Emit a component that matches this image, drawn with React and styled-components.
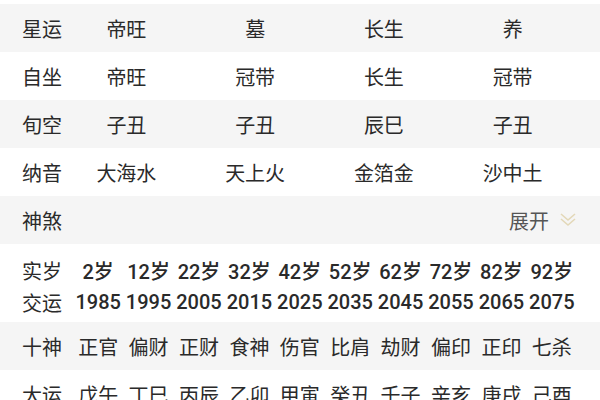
import React from 'react';
import styled, { createGlobalStyle } from 'styled-components';

const GlobalStyle = createGlobalStyle`
  body {
    margin: 0;
    background: #fff;
    font-family: "Roboto", "Noto Sans CJK SC", sans-serif;
    color: #2a2a2a;
  }
`;

const Page = styled.div`
  width: 600px;
  height: 400px;
  overflow: hidden;
  padding-top: 4px;
  box-sizing: border-box;
`;

const Row = styled.div`
  display: grid;
  grid-template-columns: ${(p) => (p.$wide ? '51px repeat(10, 1fr)' : '40px repeat(4, 1fr)')};
  align-items: center;
  height: ${(p) => p.$h || 48}px;
  padding: 0 23px 0 22px;
  background: ${(p) => (p.$shade ? '#f5f5f5' : '#fff')};
  font-size: 20px;
`;

const Label = styled.span`
  white-space: nowrap;
`;

const Cell = styled.span`
  text-align: center;
  white-space: nowrap;
  font-weight: ${(p) => (p.$bold ? 500 : 400)};
`;

const Toggle = styled.div`
  grid-column: 2 / -1;
  display: flex;
  justify-content: flex-end;
  align-items: center;
  gap: 10px;
  color: #555;
`;

const Block = styled.div`
  padding: 10px 23px 4px 22px;
  background: #fff;
`;

const Line = styled.div`
  display: grid;
  grid-template-columns: 51px repeat(10, 1fr);
  align-items: center;
  height: 32px;
  font-size: 20px;
`;

const main = [
  ['星运', ['帝旺', '墓', '长生', '养']],
  ['自坐', ['帝旺', '冠带', '长生', '冠带']],
  ['旬空', ['子丑', '子丑', '辰巳', '子丑']],
  ['纳音', ['大海水', '天上火', '金箔金', '沙中土']],
];

const ages = ['2岁', '12岁', '22岁', '32岁', '42岁', '52岁', '62岁', '72岁', '82岁', '92岁'];
const years = ['1985', '1995', '2005', '2015', '2025', '2035', '2045', '2055', '2065', '2075'];
const gods = ['正官', '偏财', '正财', '食神', '伤官', '比肩', '劫财', '偏印', '正印', '七杀'];
const luck = ['戊午', '丁巳', '丙辰', '乙卯', '甲寅', '癸丑', '壬子', '辛亥', '庚戌', '己酉'];

const Chevron = () => (
  <svg width="18" height="16" viewBox="0 0 18 16" fill="none" stroke="#e3d8b8" strokeWidth="1.6">
    <polyline points="2,2 9,8 16,2" />
    <polyline points="2,7 9,13 16,7" />
  </svg>
);

export default function App() {
  return (
    <Page>
      <GlobalStyle />
      {main.map(([label, vals], i) => (
        <Row key={label} $shade={i % 2 === 0}>
          <Label>{label}</Label>
          {vals.map((v, j) => (
            <Cell key={j}>{v}</Cell>
          ))}
        </Row>
      ))}
      <Row $shade>
        <Label>神煞</Label>
        <Toggle>
          展开
          <Chevron />
        </Toggle>
      </Row>
      <Block>
        <Line>
          <Label>实岁</Label>
          {ages.map((a) => (
            <Cell key={a} $bold>{a}</Cell>
          ))}
        </Line>
        <Line>
          <Label>交运</Label>
          {years.map((y) => (
            <Cell key={y} $bold>{y}</Cell>
          ))}
        </Line>
      </Block>
      <Row $wide $shade>
        <Label>十神</Label>
        {gods.map((g, i) => (
          <Cell key={i}>{g}</Cell>
        ))}
      </Row>
      <Row $wide>
        <Label>大运</Label>
        {luck.map((g, i) => (
          <Cell key={i}>{g}</Cell>
        ))}
      </Row>
    </Page>
  );
}
